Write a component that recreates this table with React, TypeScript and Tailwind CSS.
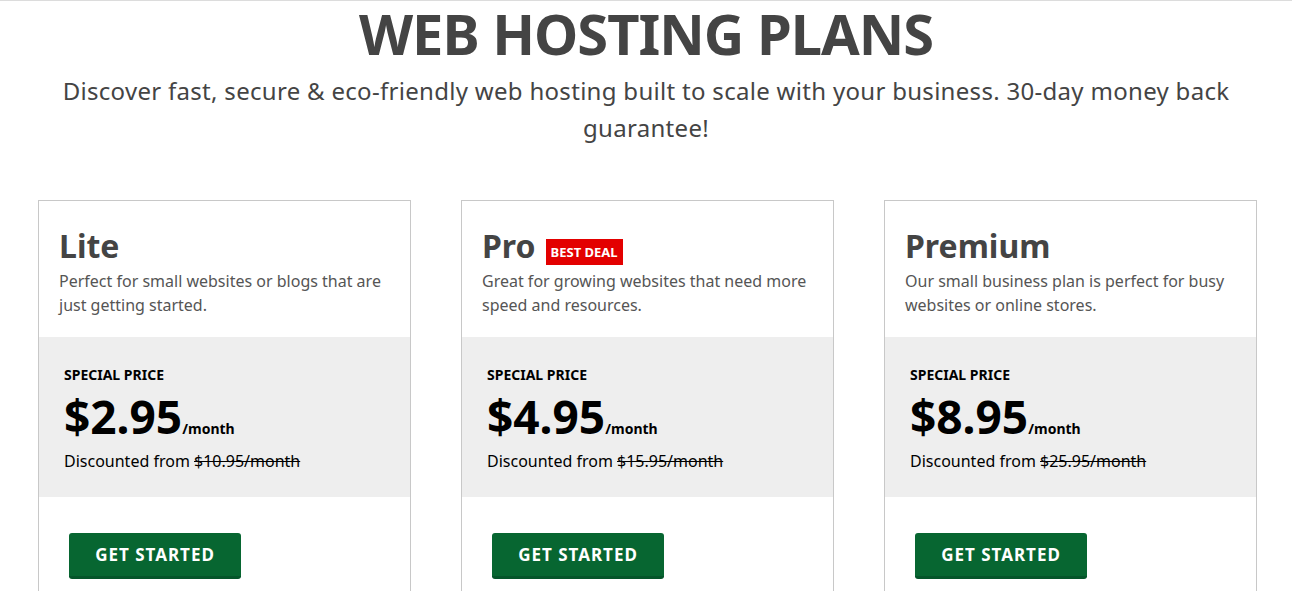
const plans = [
  {
    name: 'Lite',
    badge: false,
    desc: 'Perfect for small websites or blogs that are just getting started.',
    price: '$2.95',
    was: '$10.95/month',
  },
  {
    name: 'Pro',
    badge: true,
    desc: 'Great for growing websites that need more speed and resources.',
    price: '$4.95',
    was: '$15.95/month',
  },
  {
    name: 'Premium',
    badge: false,
    desc: 'Our small business plan is perfect for busy websites or online stores.',
    price: '$8.95',
    was: '$25.95/month',
  },
];

export default function App() {
  return (
    <div className="min-h-screen bg-white border-t border-[#dcdcdc] font-['Noto_Sans',sans-serif] text-[#444]">
      <div className="px-[50px] text-center">
        <h1 className="text-[56px] leading-[64px] font-bold tracking-[-1px] text-[#444]">WEB HOSTING PLANS</h1>
        <p className="mt-[7px] text-[24px] leading-[37px] tracking-[0.3px] text-[#444]">
          Discover fast, secure &amp; eco-friendly web hosting built to scale with your business. 30-day money back guarantee!
        </p>
      </div>

      <div className="mt-[54px] grid grid-cols-3 gap-[50px] pl-[38px] pr-[35px]">
        {plans.map(p => (
          <div key={p.name} className="border border-[#c8c8c8] bg-white">
            <div className="px-[20px] pt-[26px] pb-[20px]">
              <div className="flex items-center gap-[10px]">
                <h2 className="text-[32px] leading-[38px] font-bold text-[#444]">{p.name}</h2>
                {p.badge && (
                  <span className="mt-[12px] inline-block bg-[#e30000] px-[5px] py-[3px] text-[13px] leading-[20px] font-bold text-white">BEST DEAL</span>
                )}
              </div>
              <p className="mt-[4px] text-[16px] leading-[24px] text-[#555]">{p.desc}</p>
            </div>
            <div className="bg-[#eeeeee] px-[25px] pt-[28px] pb-[24px] text-black">
              <div className="text-[14px] leading-[20px] font-bold">SPECIAL PRICE</div>
              <div className="mt-[2px] flex items-baseline">
                <span className="text-[46px] leading-[58px] font-bold">{p.price}</span>
                <span className="text-[14px] font-bold">/month</span>
              </div>
              <div className="mt-[4px] text-[16px] leading-[24px]">
                Discounted from <span className="line-through">{p.was}</span>
              </div>
            </div>
            <div className="px-[30px] pt-[36px] pb-[30px]">
              <button className="w-[172px] h-[46px] rounded-[3px] bg-[#076631] border-b-[3px] border-[#05552a] text-white text-[17px] font-bold tracking-[1px]">
                GET STARTED
              </button>
            </div>
          </div>
        ))}
      </div>
    </div>
  );
}
